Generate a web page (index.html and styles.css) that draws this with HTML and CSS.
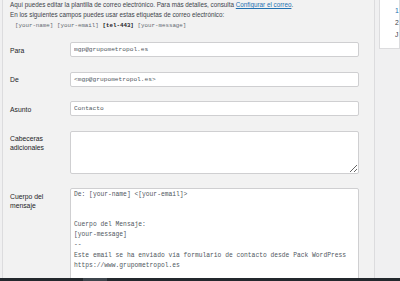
FILE: index.html
```html
<!DOCTYPE html>
<html lang="es">
<head>
  <meta charset="UTF-8" />
  <meta name="viewport" content="width=device-width, initial-scale=1.0"/>
  <title>Correo</title>
  <link rel="stylesheet" href="styles.css">
</head>
<body>
  <div class="screen">
    <div class="panel">
      <div class="intro">
        <p>Aquí puedes editar la plantilla de correo electrónico. Para más detalles, consulta <a href="#">Configurar el correo</a>.</p>
        <p>En los siguientes campos puedes usar estas etiquetas de correo electrónico:</p>
        <p class="tags">
          <span class="mailtag">[your-name]</span>
          <span class="mailtag">[your-email]</span>
          <span class="mailtag unused">[tel-443]</span>
          <span class="mailtag">[your-message]</span>
        </p>
      </div>

      <div class="form-table">
        <label for="mail-to">Para</label>
        <input id="mail-to" class="code" type="text" value="mgp@grupometropol.es" />

        <label for="mail-from">De</label>
        <input id="mail-from" class="code" type="text" value="<mgp@grupometropol.es>" />

        <label for="mail-subject">Asunto</label>
        <input id="mail-subject" class="code" type="text" value="Contacto" />

        <label for="mail-headers">Cabeceras adicionales</label>
        <textarea id="mail-headers" class="code headers"></textarea>

        <label for="mail-body">Cuerpo del mensaje</label>
        <textarea id="mail-body" class="code body">De: [your-name] <[your-email]>


Cuerpo del Mensaje:
[your-message]
--
Este email se ha enviado vía formulario de contacto desde Pack WordPress
https://www.grupometropol.es</textarea>
      </div>
    </div>

    <aside class="sidebar">
      <span class="side-item link">1</span>
      <span class="side-item">2</span>
      <span class="side-item">J</span>
    </aside>
  </div>

  <div class="taskbar">
    <span class="task"></span>
  </div>
</body>
</html>
```

FILE: styles.css
```css
* {
  box-sizing: border-box;
  margin: 0;
  padding: 0;
}

body {
  background: #f0f0f1;
  font-family: 'Liberation Sans', Arial, sans-serif;
  color: #3c434a;
  width: 400px;
  height: 281px;
  overflow: hidden;
}

.screen {
  display: flex;
  align-items: flex-start;
  height: 278px;
  overflow: hidden;
}

.panel {
  margin-left: 2px;
  width: 373px;
  height: 278px;
  flex: none;
  background: #f2f2f2;
  border-left: 1px solid #dcdcde;
  border-right: 1px solid #dcdcde;
  padding-left: 7px;
  overflow: hidden;
}

.intro p {
  font-size: 6.3px;
  line-height: 10px;
  white-space: nowrap;
}

.intro a {
  color: #2271b1;
}

.tags {
  padding-left: 4px;
}

.mailtag {
  font-family: 'Liberation Mono', monospace;
  font-size: 5.8px;
  color: #646970;
  padding: 0 1px;
}

.mailtag.unused {
  font-weight: bold;
  color: #1d2327;
}

.form-table {
  display: grid;
  grid-template-columns: 60px 289px;
  row-gap: 14.5px;
  margin-top: 11px;
}

.form-table label {
  font-size: 6.8px;
  line-height: 9px;
  padding-top: 3.5px;
  padding-right: 10px;
  color: #1d2327;
}

.code {
  font-family: 'Liberation Mono', monospace;
  font-size: 6.2px;
  color: #50575e;
  background: #fff;
  border: 1px solid #cfcfd1;
  border-radius: 2px;
  outline: none;
}

input.code {
  height: 15px;
  padding: 0 3px;
}

textarea.code {
  padding: 1px 3px;
  line-height: 10.1px;
  font-size: 6.3px;
}

.headers {
  height: 43px;
}

.body {
  height: 110px;
  resize: none;
  overflow: hidden;
}

.sidebar {
  flex: 1;
  margin-left: 4px;
  height: 49px;
  background: #fff;
  border: 1px solid #dcdcde;
  border-top: none;
  display: flex;
  flex-direction: column;
  padding: 5px 0 0 15px;
}

.side-item {
  font-size: 6.8px;
  line-height: 12px;
  color: #3c434a;
}

.side-item.link {
  color: #2271b1;
}

.taskbar {
  height: 3px;
  background: #23282d;
  padding-left: 83px;
}

.task {
  display: block;
  width: 24px;
  height: 3px;
  background: #3e454c;
}
```
